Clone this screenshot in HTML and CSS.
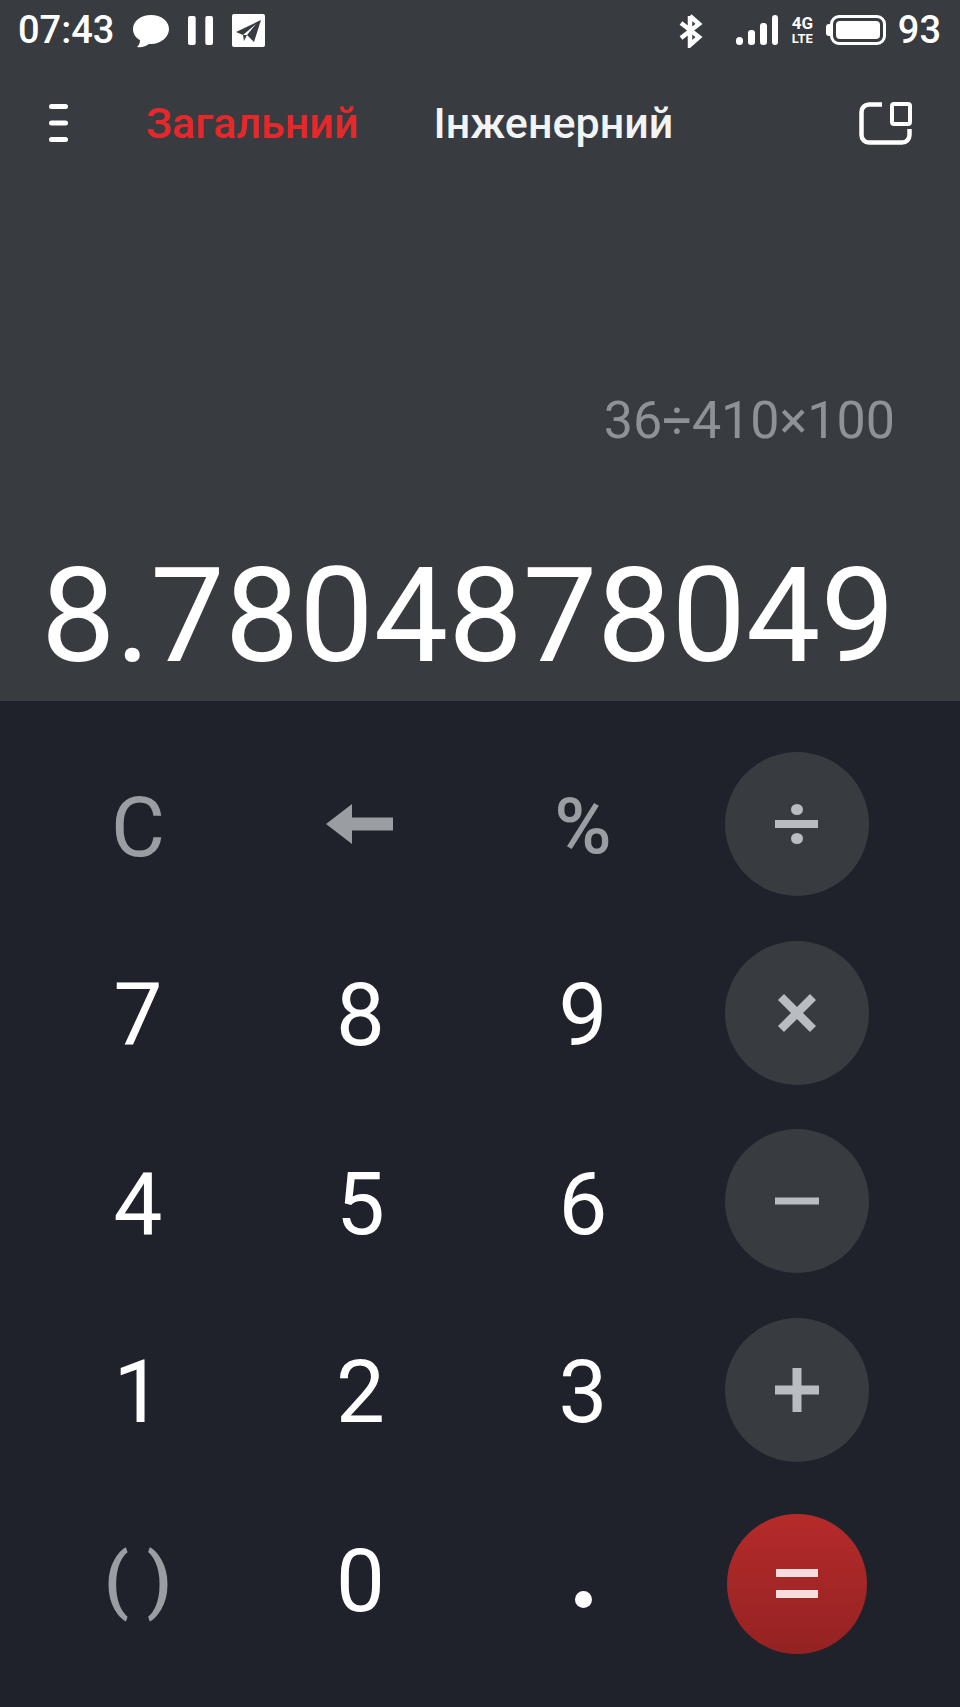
FILE: index.html
```
<!DOCTYPE html>
<html lang="uk">
<head>
<meta charset="utf-8">
<title>Калькулятор</title>
<link rel="stylesheet" href="styles.css">
</head>
<body>
<div class="app">
  <section class="top">
    <div class="status">
      <div class="status-left">
        <span class="time">07:43</span>
        <svg class="i-chat" viewBox="0 0 36 33"><path d="M18 0C8 0 0 6 0 14c0 5 3 9 7 11 0 3-1 5-3 7 5 1 9-1 12-3h2c10 0 18-7 18-15S28 0 18 0z"/></svg>
        <svg class="i-pause" viewBox="0 0 26 30"><rect x="0" y="0" width="8" height="30" rx="2"/><rect x="18" y="0" width="8" height="30" rx="2"/></svg>
        <svg class="i-tg" viewBox="0 0 33 33"><rect width="33" height="33" rx="2" fill="#fff"/><path d="M4 18 29 6 22 28 15 21 12 27 11 21z" fill="#383b40"/><path d="M11 21 24 10 15 21z" fill="#fff"/></svg>
      </div>
      <div class="status-right">
        <svg class="i-bt" viewBox="0 0 26 35"><path d="M13 3v29l9-8-18-14M13 3l9 8-18 14" fill="none" stroke="#fff" stroke-width="4.5"/></svg>
        <svg class="i-sig" viewBox="0 0 42 30"><rect x="0" y="22" width="7" height="8" rx="3.5"/><rect x="12" y="15" width="7" height="15" rx="3"/><rect x="24" y="8" width="7" height="22" rx="3"/><rect x="36" y="0" width="6" height="30" rx="3"/></svg>
        <span class="net"><span>4G</span><span>LTE</span></span>
        <span class="batt"><span class="batt-tip"></span><span class="batt-body"><span class="batt-fill"></span></span></span>
        <span class="pct">93</span>
      </div>
    </div>
    <div class="tabs">
      <svg class="i-menu" viewBox="0 0 19 38"><rect x="0" y="0" width="19" height="5" rx="2.5"/><rect x="0" y="16.5" width="19" height="5" rx="2.5"/><rect x="0" y="33" width="19" height="5" rx="2.5"/></svg>
      <span class="tab active">Загальний</span>
      <span class="tab">Інженерний</span>
      <svg class="i-win" viewBox="0 0 53 43"><path d="M23 2.500H10A7.500 7.500 0 0 0 2.500 10v23a7.500 7.500 0 0 0 7.500 7.500h33a7.500 7.500 0 0 0 7.500-7.500v-6" fill="none" stroke="#fff" stroke-width="4.500"/><rect x="33" y="2" width="18" height="20" rx="2" fill="none" stroke="#fff" stroke-width="4"/></svg>
    </div>
    <div class="display">
      <div class="expr">36÷410×100</div>
      <div class="result">8.7804878049</div>
    </div>
  </section>
  <section class="pad">
    <div class="key num dim">C</div>
    <div class="key"><svg class="i-back" viewBox="0 0 67 40"><path d="M0 20 26 0v13.500h41v13H26V40z" fill="#9a9ea2"/></svg></div>
    <div class="key num dim pct-key">%</div>
    <div class="key"><span class="op"><span class="sym-div"><i></i><b></b><i></i></span></span></div>

    <div class="key num">7</div>
    <div class="key num">8</div>
    <div class="key num">9</div>
    <div class="key"><span class="op"><svg class="i-op" viewBox="0 0 44 44"><path d="M6 6l32 32M38 6 6 38" stroke="#b9bdc2" stroke-width="8.500"/></svg></span></div>

    <div class="key num">4</div>
    <div class="key num">5</div>
    <div class="key num">6</div>
    <div class="key"><span class="op"><svg class="i-op" viewBox="0 0 44 44"><path d="M0 22h44" stroke="#b9bdc2" stroke-width="7"/></svg></span></div>

    <div class="key num">1</div>
    <div class="key num">2</div>
    <div class="key num">3</div>
    <div class="key"><span class="op"><svg class="i-op" viewBox="0 0 44 44"><path d="M0 22h44M22 0v44" stroke="#b9bdc2" stroke-width="9"/></svg></span></div>

    <div class="key num dim parens">( )</div>
    <div class="key num">0</div>
    <div class="key"><span class="dot"></span></div>
    <div class="key"><span class="eq"><i></i><i></i></span></div>
  </section>
</div>
</body>
</html>
```
FILE: styles.css
```
* { box-sizing: border-box; }
html, body { margin: 0; padding: 0; }
body { background: #1f222b; font-family: Roboto, "Noto Sans", sans-serif; color: #fff; }
.app { width: 960px; height: 1707px; display: flex; flex-direction: column; overflow: hidden; }
.top { height: 701px; background: #383b40; display: flex; flex-direction: column; border-bottom: 1px solid #3a3d44; }
svg { display: block; fill: #fff; flex: none; }

.status { height: 60px; display: flex; justify-content: space-between; align-items: center; padding: 0 19px 0 18px; }
.status-left, .status-right { display: flex; align-items: center; }
.time, .pct { font-size: 38px; font-weight: 500; line-height: 40px; }
.i-chat { width: 36px; height: 33px; margin: 2px 0 0 19px; }
.i-pause { width: 25px; height: 29px; margin-left: 19px; }
.i-tg { width: 33px; height: 33px; margin-left: 19px; }
.i-bt { width: 26px; height: 35px; }
.i-sig { width: 42px; height: 30px; margin-left: 33px; }
.net { display: flex; flex-direction: column; align-items: center; gap: 1px; margin-left: 13px; width: 23px; font-weight: 700; font-size: 13px; line-height: 13px; }
.net span:first-child { font-size: 17px; line-height: 15px; }
.batt { display: flex; align-items: center; margin-left: 12px; }
.batt-tip { width: 4px; height: 12px; background: #fff; border-radius: 3px 0 0 3px; }
.batt-body { width: 56px; height: 30px; border: 3px solid #fff; border-radius: 9px; padding: 3px; display: flex; }
.batt-fill { flex: 1; background: #fff; border-radius: 4px; }
.pct { margin-left: 12px; }

.tabs { height: 62px; margin-top: 32px; display: flex; align-items: center; padding: 0 48px 0 49px; }
.i-menu { width: 19px; height: 38px; }
.tab { font-size: 43px; font-weight: 500; line-height: 62px; color: #f2f3f4; }
.tab.active { color: #e6282b; margin-left: 78px; }
.tab + .tab { margin-left: 75px; }
.i-win { width: 53px; height: 43px; margin-left: auto; }

.display { flex: 1; display: flex; flex-direction: column; align-items: flex-end; justify-content: flex-end; padding-right: 65px; }
.expr { font-size: 52px; line-height: 60px; color: #8e9195; margin-bottom: 88px; }
.result { font-size: 132.500px; line-height: 154px; margin-bottom: 7px; }

.pad { flex: 1; display: grid; grid-template-columns: 222px 223px 222px 205px; grid-auto-rows: 188.5px; padding: 29px 0 0 27px; }
.key { display: flex; align-items: center; justify-content: center; font-size: 87px; line-height: 1; color: #fff; }
.key.num { padding-top: 6px; }
.key.dim { color: #9a9ea2; font-size: 83px; }
.key.pct-key { font-size: 78px; font-weight: 500; }
.key.parens { font-size: 72px; font-weight: 500; }
.i-back { width: 67px; height: 40px; margin-right: 2px; }
.op { width: 144px; height: 144px; border-radius: 50%; background: #383b40; display: flex; align-items: center; justify-content: center; }
.i-op { width: 44px; height: 44px; }
.sym-div { display: flex; flex-direction: column; align-items: center; gap: 5px; }
.sym-div i { width: 12px; height: 11px; border-radius: 50%; background: #b9bdc2; }
.sym-div b { width: 43px; height: 8px; background: #b9bdc2; }
.dot { width: 17px; height: 17px; border-radius: 50%; background: #fff; margin-top: 42px; }
.eq { width: 140px; height: 140px; border-radius: 50%; background: linear-gradient(#b52b2a, #942222); display: flex; flex-direction: column; align-items: center; justify-content: center; gap: 13px; margin-top: 11px; }
.eq i { width: 42px; height: 8px; background: #f7dcdc; }
```
